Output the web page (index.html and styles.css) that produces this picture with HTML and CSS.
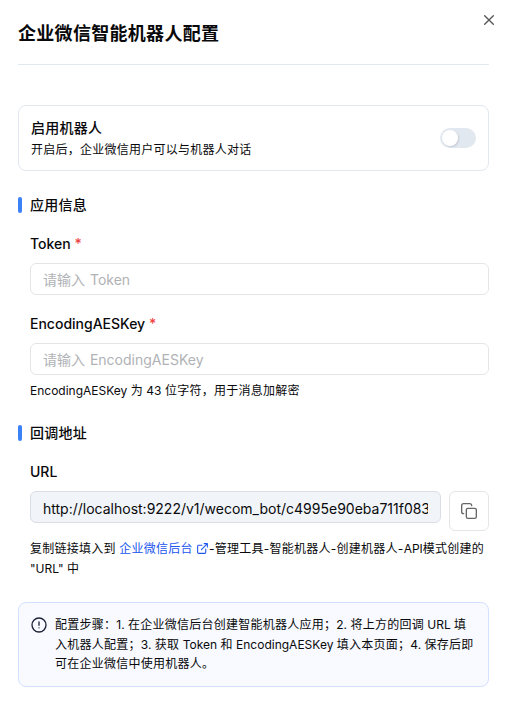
FILE: index.html
```html
<!DOCTYPE html>
<html lang="zh-CN">
<head>
<meta charset="utf-8">
<title>企业微信智能机器人配置</title>
<link rel="stylesheet" href="styles.css">
</head>
<body>
<main class="dialog">
  <button class="close" aria-label="关闭"><svg width="16" height="16" viewBox="0 0 24 24"><path d="M18.500 5.500l-13 13M5.500 5.500l13 13"/></svg></button>
  <header class="header"><h1 class="title">企业微信智能机器人配置</h1></header>
  <section class="enable">
    <div>
      <div class="enable-title zh">启用机器人</div>
      <div class="enable-desc zh">开启后，企业微信用户可以与机器人对话</div>
    </div>
    <span class="switch"></span>
  </section>
  <section class="section">
    <h2 class="section-title zh">应用信息</h2>
    <div class="field">
      <label class="label">Token <b class="req">*</b></label>
      <input class="input" placeholder="请输入 Token">
    </div>
    <div class="field">
      <label class="label">EncodingAESKey <b class="req">*</b></label>
      <input class="input" placeholder="请输入 EncodingAESKey">
      <p class="hint">EncodingAESKey <span class="zh">为</span> 43 <span class="zh">位字符，用于消息加解密</span></p>
    </div>
  </section>
  <section class="section">
    <h2 class="section-title zh">回调地址</h2>
    <div class="field">
      <label class="label">URL</label>
      <div class="url-row">
        <div class="input readonly"><span class="url">http://localhost:9222/v1/wecom_bot/c4995e90eba711f083</span></div>
        <button class="copy" aria-label="复制"><svg width="16" height="16" viewBox="0 0 24 24"><rect x="8" y="8" width="15" height="15" rx="2.500"/><path d="M4 16c-1.700 0-3-1.300-3-3V4c0-1.700 1.300-3 3-3h9c1.700 0 3 1.300 3 3"/></svg></button>
      </div>
      <p class="help"><span class="zh">复制链接填入到</span> <a class="link"><span class="zh">企业微信后台</span> <svg width="13" height="13" viewBox="0 0 24 24"><path d="M15 3h6v6M10 14 21 3M18 13v6a2 2 0 0 1-2 2H5a2 2 0 0 1-2-2V8a2 2 0 0 1 2-2h6"/></svg></a><span class="zh">-管理工具-智能机器人-创建机器人-</span>API<span class="zh">模式创建的</span><br>"URL" 中</p>
    </div>
  </section>
  <aside class="steps">
    <svg width="16" height="16" viewBox="0 0 24 24"><circle cx="12" cy="12" r="10.500"/><path d="M12 7.500v5M12 16.200h.01"/></svg>
    <p class="steps-text"><span class="zh">配置步骤：</span>1. <span class="zh">在企业微信后台创建智能机器人应用；</span>2. <span class="zh">将上方的回调</span> URL <span class="zh">填</span><br><span class="zh">入机器人配置；</span>3. <span class="zh">获取</span> Token <span class="zh">和</span> EncodingAESKey <span class="zh">填入本页面；</span>4. <span class="zh">保存后即</span><br><span class="zh">可在企业微信中使用机器人。</span></p>
  </aside>
</main>
</body>
</html>
```
FILE: styles.css
```css
* { box-sizing: border-box; }
body, h1, h2, p { margin: 0; }
body { background: #fff; color: #09090b; font: 14px/20px Inter, "Noto Sans CJK SC", sans-serif; overflow: hidden; }
svg { fill: none; stroke: currentColor; stroke-width: 2; stroke-linecap: round; stroke-linejoin: round; display: block; flex: none; }
button { padding: 0; font: inherit; }
.zh { letter-spacing: .25px; }
.dialog { position: relative; height: 714px; padding: 20px 19px 0 18px; }
.close { position: absolute; right: 11px; top: 12px; border: 0; background: none; color: #555; }
.header { height: 45px; border-bottom: 1px solid #e2e8f0; }
.title { font-size: 18px; line-height: 28px; font-weight: 600; letter-spacing: .3px; }
.enable { margin-top: 40px; height: 66px; padding: 0 12px; border: 1px solid #e2e8f0; border-radius: 8px; display: flex; align-items: center; justify-content: space-between; }
.enable-title { font-weight: 500; line-height: 20px; }
.enable-desc { font-size: 12px; line-height: 16px; margin-top: 4px; }
.switch { width: 36px; height: 20px; padding: 2px; border-radius: 10px; background: #e2e8f0; }
.switch::before { content: ""; display: block; width: 16px; height: 16px; border-radius: 50%; background: #fff; box-shadow: 1px 1px 2px rgba(0, 0, 0, .12); }
.section { margin-top: 24px; }
.section-title { display: flex; align-items: center; gap: 8px; font-size: 14px; line-height: 20px; font-weight: 500; }
.section-title::before { content: ""; width: 4px; height: 16px; border-radius: 2px; background: #3b82f6; }
.field { margin: 16px 0 0 12px; }
.label { display: block; line-height: 26px; font-weight: 500; }
.req { color: #ef4444; font-weight: 500; }
.input { display: block; width: 100%; height: 32px; margin-top: 6px; padding: 0 12px; border: 1px solid #e5e5e8; border-radius: 6px; background: #fff; color: #09090b; font: inherit; }
.input::placeholder { color: #b0b2b5; opacity: 1; word-spacing: 1px; }
.hint { font-size: 12px; line-height: 16px; margin-top: 8px; }
.url-row { display: flex; gap: 8px; margin-top: 6px; }
.readonly { flex: 1; min-width: 0; margin: 0; padding-top: 1px; border-color: #dadde5; background: #f1f5f9; line-height: 29px; }
.url { display: block; overflow: hidden; white-space: nowrap; line-height: 31px; height: 29px; }
.copy { width: 40px; height: 40px; border: 1px solid #e5e5e8; border-radius: 6px; background: #fff; color: #666; display: flex; align-items: center; justify-content: center; }
.help { font-size: 12px; line-height: 20px; margin-top: 8px; white-space: nowrap; }
.link { color: #2055ee; }
.link svg { display: inline-block; vertical-align: -2px; }
.steps { margin-top: 23px; height: 85px; padding: 12px; border: 1px solid #d3e0ff; border-radius: 8px; background: #f8faff; display: flex; gap: 8px; }
.steps > svg { margin-top: 2px; color: #1e2338; }
.steps-text { font-size: 12px; line-height: 19.5px; white-space: nowrap; }
```
